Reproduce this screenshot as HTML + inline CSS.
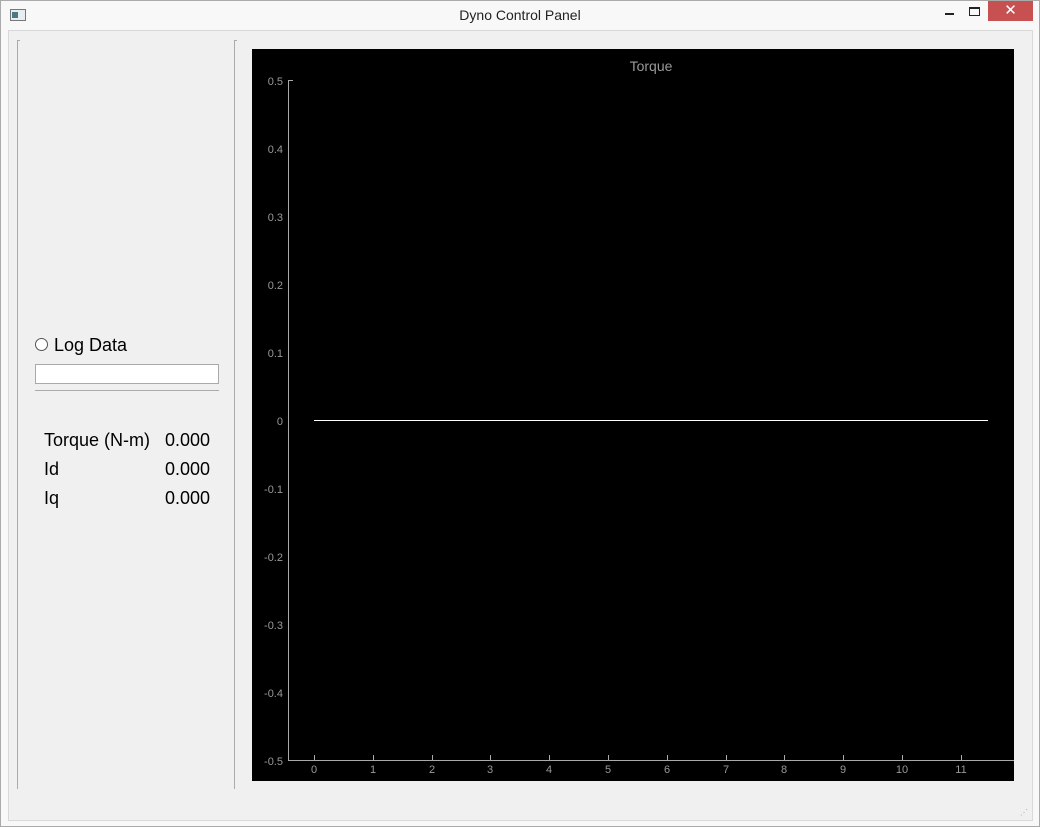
<!DOCTYPE html>
<html><head><meta charset="utf-8"><style>
body{margin:0;width:1040px;height:827px;background:#f0f0f0;position:relative;overflow:hidden;font-family:"Liberation Sans",sans-serif}
.a{position:absolute}
</style></head><body>
<div class="a" style="left:0;top:0;width:1038px;height:825px;border:1px solid #aaa;background:#f8f8f8"></div>
<div class="a" style="left:8px;top:30px;width:1023px;height:789px;background:#f0f0f0;border:1px solid #d8d8d8"></div>
<div class="a" style="left:0;top:7px;width:1040px;text-align:center;font-size:14px;color:#222">Dyno Control Panel</div>
<div class="a" style="left:10px;top:9px;width:14px;height:10px;border:1px solid #777;background:#e8eef0"><div class="a" style="left:1px;top:2px;width:6px;height:6px;background:#4a7a80"></div></div>
<div class="a" style="left:945px;top:13px;width:9px;height:2px;background:#222"></div>
<div class="a" style="left:969px;top:7px;width:9px;height:6px;border:1px solid #222;border-top-width:2px"></div>
<div class="a" style="left:988px;top:1px;width:45px;height:20px;background:#c75050;color:#fff;text-align:center;font-size:15px;line-height:20px">✕</div>
<div class="a" style="left:17px;top:40px;width:1px;height:749px;background:#aaa"></div>
<div class="a" style="left:17px;top:40px;width:3px;height:1px;background:#aaa"></div>
<div class="a" style="left:234px;top:40px;width:1px;height:749px;background:#aaa"></div>
<div class="a" style="left:234px;top:40px;width:3px;height:1px;background:#aaa"></div>
<div class="a" style="left:35px;top:338px;width:11px;height:11px;border:1px solid #555;border-radius:50%;background:#fff"></div>
<div class="a" style="left:54px;top:335px;font-size:18px;color:#000">Log Data</div>
<div class="a" style="left:35px;top:364px;width:182px;height:18px;border:1px solid #aaa;background:#fff"></div>
<div class="a" style="left:35px;top:390px;width:184px;height:1px;background:#aaa"></div>
<div class="a" style="left:44px;top:430px;font-size:18px">Torque (N-m)</div>
<div class="a" style="left:44px;top:459px;font-size:18px">Id</div>
<div class="a" style="left:44px;top:488px;font-size:18px">Iq</div>
<div class="a" style="left:150px;top:430px;width:60px;text-align:right;font-size:18px">0.000</div>
<div class="a" style="left:150px;top:459px;width:60px;text-align:right;font-size:18px">0.000</div>
<div class="a" style="left:150px;top:488px;width:60px;text-align:right;font-size:18px">0.000</div>
<svg class="a" style="left:252px;top:49px" width="762" height="732" viewBox="252 49 762 732" font-family="Liberation Sans,sans-serif">
<rect x="252" y="49" width="762" height="732" fill="#000"/>
<text x="651" y="71" fill="#999" font-size="14" text-anchor="middle">Torque</text>
<g stroke="#aaa" stroke-width="1">
<line x1="288.5" y1="80" x2="288.5" y2="760"/>
<line x1="288" y1="760.5" x2="1014" y2="760.5"/>
</g>
<line x1="314" y1="420.5" x2="988" y2="420.5" stroke="#fff" stroke-width="1"/>
<g fill="#999" font-size="11" text-anchor="end">
<text x="283" y="85">0.5</text><text x="283" y="153">0.4</text><text x="283" y="221">0.3</text><text x="283" y="289">0.2</text><text x="283" y="357">0.1</text><text x="283" y="425">0</text><text x="283" y="493">-0.1</text><text x="283" y="561">-0.2</text><text x="283" y="629">-0.3</text><text x="283" y="697">-0.4</text><text x="283" y="765">-0.5</text>
</g>
<g stroke="#aaa"><line x1="288" y1="80.5" x2="293" y2="80.5"/>
<line x1="314.5" y1="755" x2="314.5" y2="760"/><line x1="373.5" y1="755" x2="373.5" y2="760"/><line x1="432.5" y1="755" x2="432.5" y2="760"/><line x1="490.5" y1="755" x2="490.5" y2="760"/><line x1="549.5" y1="755" x2="549.5" y2="760"/><line x1="608.5" y1="755" x2="608.5" y2="760"/><line x1="667.5" y1="755" x2="667.5" y2="760"/><line x1="726.5" y1="755" x2="726.5" y2="760"/><line x1="784.5" y1="755" x2="784.5" y2="760"/><line x1="843.5" y1="755" x2="843.5" y2="760"/><line x1="902.5" y1="755" x2="902.5" y2="760"/><line x1="961.5" y1="755" x2="961.5" y2="760"/></g>
<g fill="#999" font-size="11" text-anchor="middle">
<text x="314" y="773">0</text><text x="373" y="773">1</text><text x="432" y="773">2</text><text x="490" y="773">3</text><text x="549" y="773">4</text><text x="608" y="773">5</text><text x="667" y="773">6</text><text x="726" y="773">7</text><text x="784" y="773">8</text><text x="843" y="773">9</text><text x="902" y="773">10</text><text x="961" y="773">11</text>
</g>
</svg>
<div class="a" style="left:1020px;top:808px;font-size:8px;color:#aaa">⋰</div>
</body></html>
